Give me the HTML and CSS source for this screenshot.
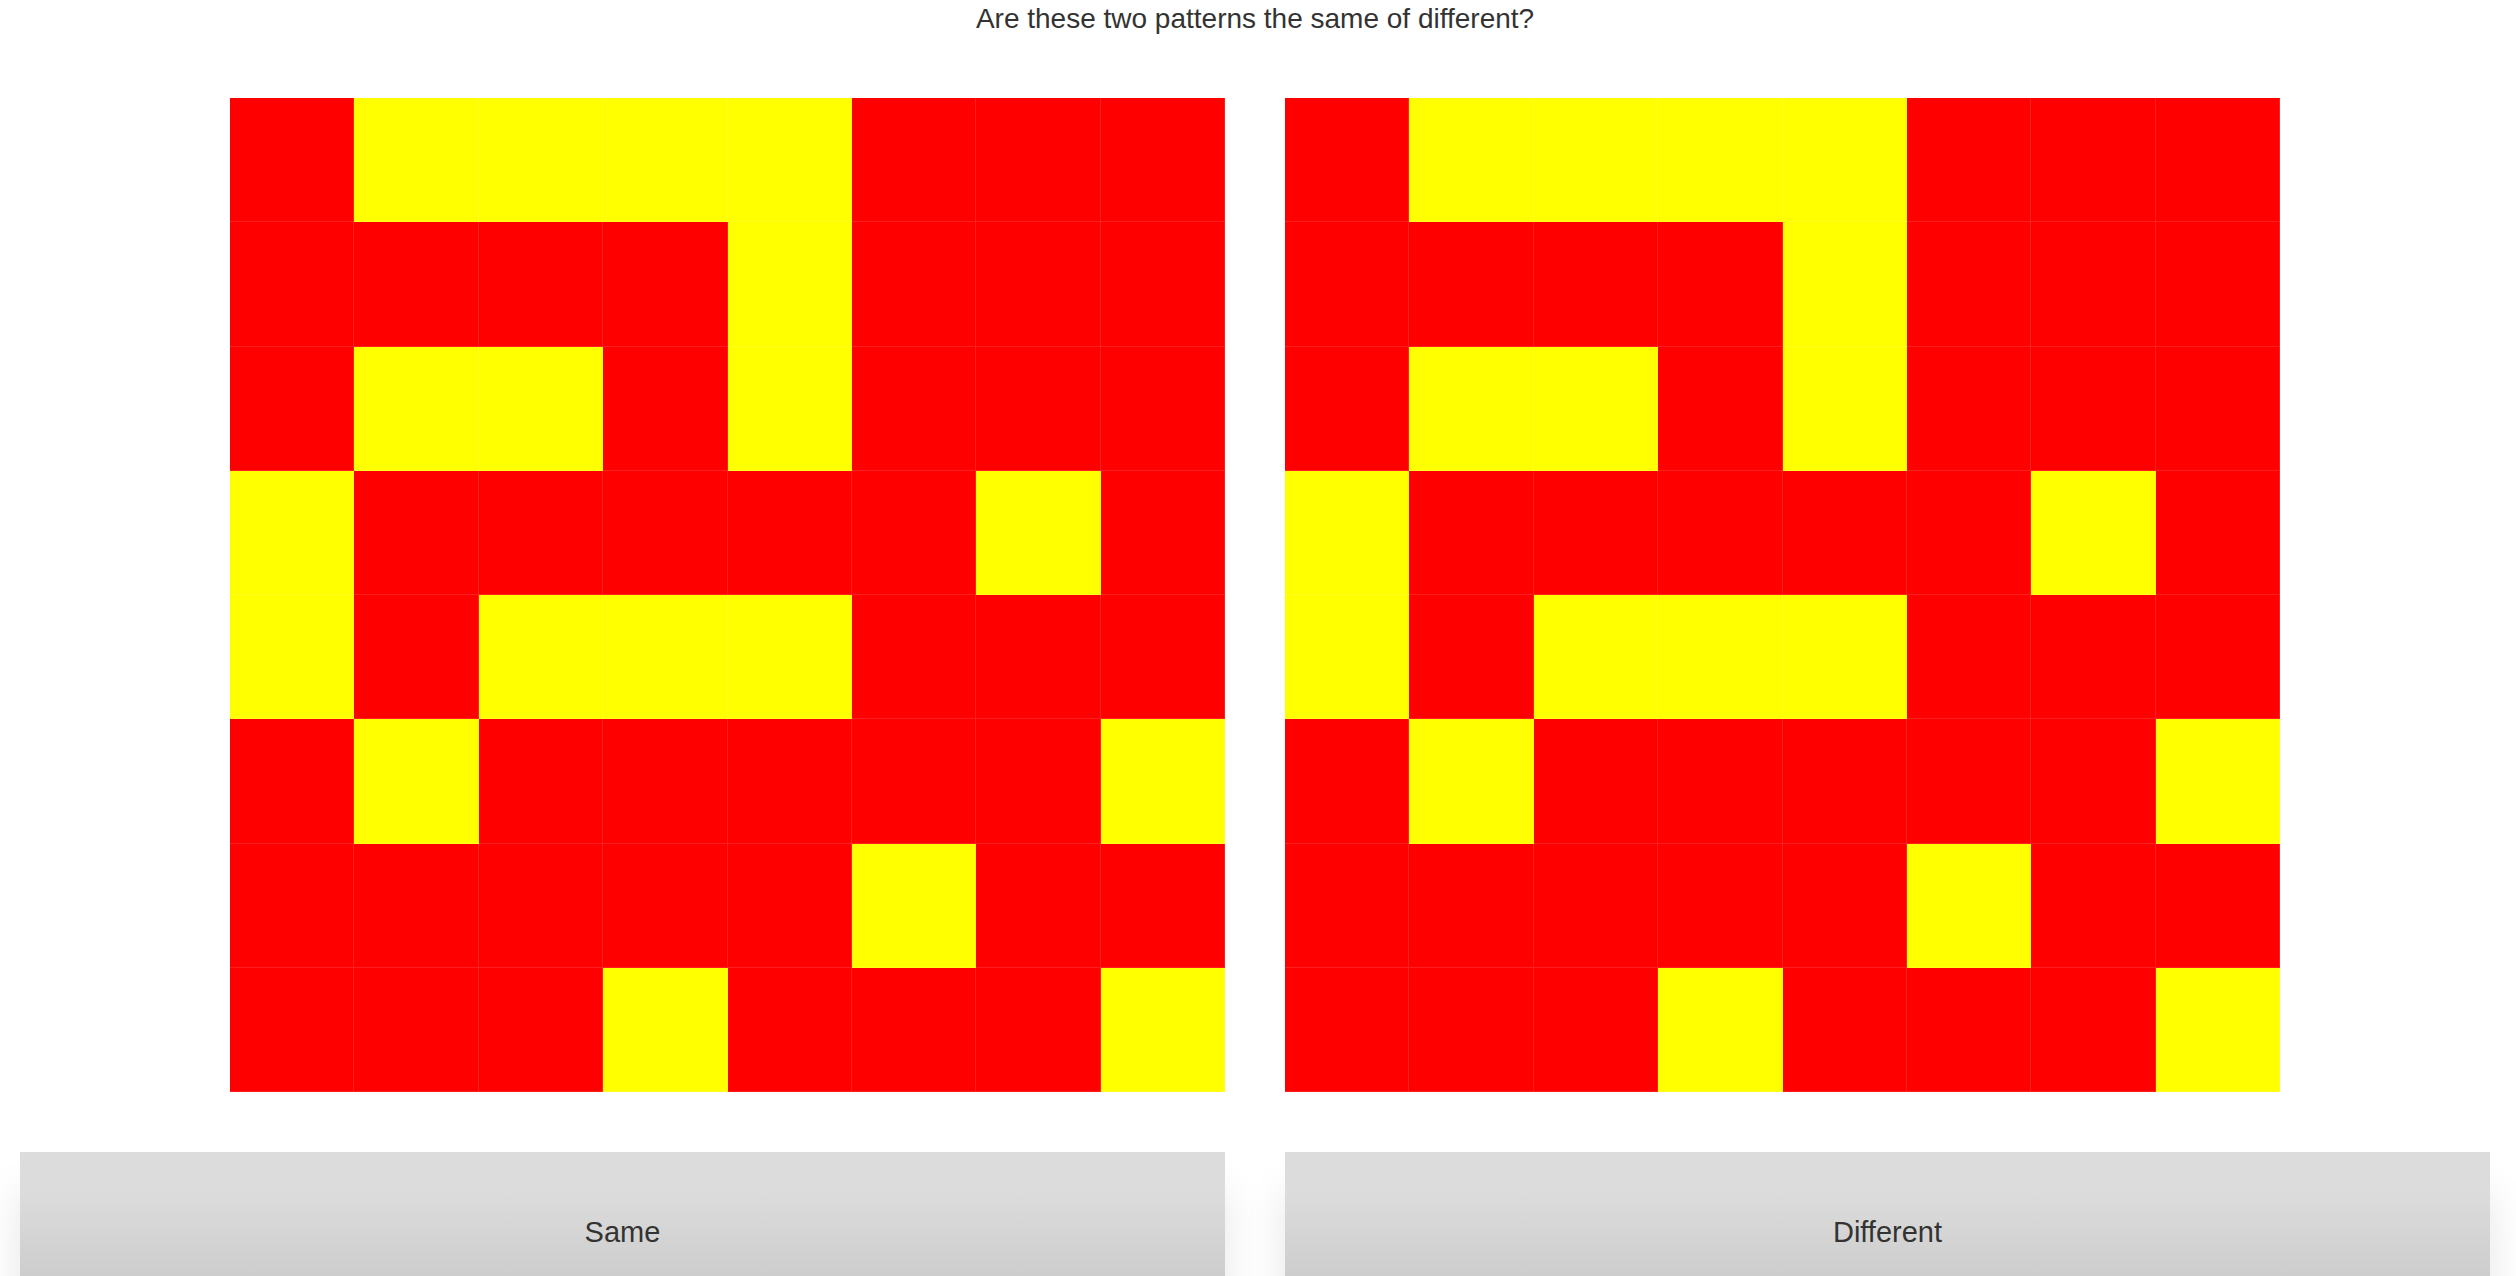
FILE: index.html
```html
<!DOCTYPE html>
<html>
<head>
<meta charset="utf-8">
<link rel="stylesheet" href="styles.css">
</head>
<body>
<h1 class="title">Are these two patterns the same of different?</h1>
<div class="boards">
  <div class="board">
    <i class="r"></i><i class="y"></i><i class="y"></i><i class="y"></i><i class="y"></i><i class="r"></i><i class="r"></i><i class="r"></i>
    <i class="r"></i><i class="r"></i><i class="r"></i><i class="r"></i><i class="y"></i><i class="r"></i><i class="r"></i><i class="r"></i>
    <i class="r"></i><i class="y"></i><i class="y"></i><i class="r"></i><i class="y"></i><i class="r"></i><i class="r"></i><i class="r"></i>
    <i class="y"></i><i class="r"></i><i class="r"></i><i class="r"></i><i class="r"></i><i class="r"></i><i class="y"></i><i class="r"></i>
    <i class="y"></i><i class="r"></i><i class="y"></i><i class="y"></i><i class="y"></i><i class="r"></i><i class="r"></i><i class="r"></i>
    <i class="r"></i><i class="y"></i><i class="r"></i><i class="r"></i><i class="r"></i><i class="r"></i><i class="r"></i><i class="y"></i>
    <i class="r"></i><i class="r"></i><i class="r"></i><i class="r"></i><i class="r"></i><i class="y"></i><i class="r"></i><i class="r"></i>
    <i class="r"></i><i class="r"></i><i class="r"></i><i class="y"></i><i class="r"></i><i class="r"></i><i class="r"></i><i class="y"></i>
  </div>
  <div class="board">
    <i class="r"></i><i class="y"></i><i class="y"></i><i class="y"></i><i class="y"></i><i class="r"></i><i class="r"></i><i class="r"></i>
    <i class="r"></i><i class="r"></i><i class="r"></i><i class="r"></i><i class="y"></i><i class="r"></i><i class="r"></i><i class="r"></i>
    <i class="r"></i><i class="y"></i><i class="y"></i><i class="r"></i><i class="y"></i><i class="r"></i><i class="r"></i><i class="r"></i>
    <i class="y"></i><i class="r"></i><i class="r"></i><i class="r"></i><i class="r"></i><i class="r"></i><i class="y"></i><i class="r"></i>
    <i class="y"></i><i class="r"></i><i class="y"></i><i class="y"></i><i class="y"></i><i class="r"></i><i class="r"></i><i class="r"></i>
    <i class="r"></i><i class="y"></i><i class="r"></i><i class="r"></i><i class="r"></i><i class="r"></i><i class="r"></i><i class="y"></i>
    <i class="r"></i><i class="r"></i><i class="r"></i><i class="r"></i><i class="r"></i><i class="y"></i><i class="r"></i><i class="r"></i>
    <i class="r"></i><i class="r"></i><i class="r"></i><i class="y"></i><i class="r"></i><i class="r"></i><i class="r"></i><i class="y"></i>
  </div>
</div>
<div class="buttons">
  <button class="btn">Same</button>
  <button class="btn">Different</button>
</div>
</body>
</html>
```
FILE: styles.css
```css
html, body {
  margin: 0;
  padding: 0;
  background: #fff;
  overflow: hidden;
  font-family: "Liberation Sans", Arial, sans-serif;
  color: #333;
}
.title {
  margin: 0;
  padding: 4px 6px 0 0;
  height: 98px;
  box-sizing: border-box;
  font-size: 28px;
  font-weight: normal;
  line-height: 30px;
  text-align: center;
}
.boards {
  display: flex;
  gap: 60px;
  padding-left: 230px;
}
.board {
  width: 995px;
  height: 994px;
  display: grid;
  grid-template-columns: repeat(8, 1fr);
  grid-template-rows: repeat(8, 1fr);
}
.board i {
  display: block;
  box-shadow: inset -1px -1px 0 rgba(255, 255, 255, 0.12);
}
.board i.r { background: #ff0000; }
.board i.y { background: #ffff00; }
.buttons {
  display: flex;
  gap: 60px;
  padding: 0 26px 0 20px;
  margin-top: 60px;
}
.btn {
  flex: 1;
  height: 160px;
  border: 0;
  border-radius: 0;
  padding: 0;
  font-family: "Liberation Sans", Arial, sans-serif;
  font-size: 29px;
  color: #333;
  background: linear-gradient(#dcdcdc 0%, #dcdcdc 25%, #cdcdcd 78%, #c8c8c8 100%);
  box-shadow: 0 40px 40px rgba(0, 0, 0, 0.1);
}
```
